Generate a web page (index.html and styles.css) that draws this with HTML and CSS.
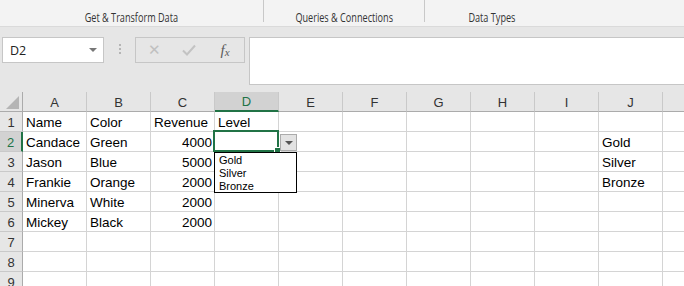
FILE: index.html
```html
<!DOCTYPE html>
<html lang="en">
    <head>
        <meta charset="utf-8">
        <title>Book1 - Excel</title>
        <link rel="stylesheet" href="styles.css">
    </head>
    <body>
        <div class="ribbon">
            <div class="group group-get"><span>Get &amp; Transform Data</span></div>
            <div class="group group-queries"><span>Queries &amp; Connections</span></div>
            <div class="group group-types"><span>Data Types</span></div>
        </div>

        <div class="formula-band">
            <div class="name-box">
                <span>D2</span>
                <span class="caret"></span>
            </div>
            <div class="grip"><i></i><i></i><i></i></div>
            <div class="fx-buttons">
                <span class="fx-btn cancel">&#x2715;</span>
                <span class="fx-btn enter">
                    <svg width="14" height="12" viewBox="0 0 14 12"><path d="M1 6.5 L5 10.5 L13 1.5" fill="none" stroke="#c3c3c3" stroke-width="2"/></svg>
                </span>
                <span class="fx-btn fx"><i>f</i><i class="x">x</i></span>
            </div>
            <div class="formula-input"></div>
        </div>

        <div class="sheet">
            <div class="grid">
                <div class="hd corner"><span class="tri"></span></div>
                <div class="hd col">A</div>
                <div class="hd col">B</div>
                <div class="hd col">C</div>
                <div class="hd col active">D</div>
                <div class="hd col">E</div>
                <div class="hd col">F</div>
                <div class="hd col">G</div>
                <div class="hd col">H</div>
                <div class="hd col">I</div>
                <div class="hd col">J</div>
                <div class="hd col"></div>

                <div class="hd row">1</div>
                <div class="c">Name</div><div class="c">Color</div><div class="c">Revenue</div><div class="c">Level</div>
                <div class="c"></div><div class="c"></div><div class="c"></div><div class="c"></div><div class="c"></div><div class="c"></div><div class="c"></div>

                <div class="hd row active">2</div>
                <div class="c">Candace</div><div class="c">Green</div><div class="c num">4000</div><div class="c"></div>
                <div class="c"></div><div class="c"></div><div class="c"></div><div class="c"></div><div class="c"></div><div class="c">Gold</div><div class="c"></div>

                <div class="hd row">3</div>
                <div class="c">Jason</div><div class="c">Blue</div><div class="c num">5000</div><div class="c"></div>
                <div class="c"></div><div class="c"></div><div class="c"></div><div class="c"></div><div class="c"></div><div class="c">Silver</div><div class="c"></div>

                <div class="hd row">4</div>
                <div class="c">Frankie</div><div class="c">Orange</div><div class="c num">2000</div><div class="c"></div>
                <div class="c"></div><div class="c"></div><div class="c"></div><div class="c"></div><div class="c"></div><div class="c">Bronze</div><div class="c"></div>

                <div class="hd row">5</div>
                <div class="c">Minerva</div><div class="c">White</div><div class="c num">2000</div><div class="c"></div>
                <div class="c"></div><div class="c"></div><div class="c"></div><div class="c"></div><div class="c"></div><div class="c"></div><div class="c"></div>

                <div class="hd row">6</div>
                <div class="c">Mickey</div><div class="c">Black</div><div class="c num">2000</div><div class="c"></div>
                <div class="c"></div><div class="c"></div><div class="c"></div><div class="c"></div><div class="c"></div><div class="c"></div><div class="c"></div>

                <div class="hd row">7</div>
                <div class="c"></div><div class="c"></div><div class="c"></div><div class="c"></div>
                <div class="c"></div><div class="c"></div><div class="c"></div><div class="c"></div><div class="c"></div><div class="c"></div><div class="c"></div>

                <div class="hd row">8</div>
                <div class="c"></div><div class="c"></div><div class="c"></div><div class="c"></div>
                <div class="c"></div><div class="c"></div><div class="c"></div><div class="c"></div><div class="c"></div><div class="c"></div><div class="c"></div>

                <div class="hd row">9</div>
                <div class="c"></div><div class="c"></div><div class="c"></div><div class="c"></div>
                <div class="c"></div><div class="c"></div><div class="c"></div><div class="c"></div><div class="c"></div><div class="c"></div><div class="c"></div>
            </div>

            <!-- active cell, in-cell dropdown and its open list -->
            <div class="selection"><span class="handle"></span></div>
            <div class="dd-button"><span class="dd-caret"></span></div>
            <ul class="dd-list">
                <li>Gold</li>
                <li>Silver</li>
                <li>Bronze</li>
            </ul>
        </div>
    </body>
</html>
```

FILE: styles.css
```css
html, body {
    margin: 0;
    padding: 0;
}

body {
    width: 684px;
    height: 286px;
    overflow: hidden;
    background-color: #E6E6E6;
    font-family: "Liberation Sans", Arial, sans-serif;
    color: #000000;
}

/* ribbon group labels */
.ribbon {
    display: flex;
    align-items: flex-start;
    height: 26px;
    background-color: #F3F3F3;
    border-bottom: 1px solid #DADADA;
}

.group {
    position: relative;
    display: flex;
    justify-content: center;
    height: 22px;
    border-right: 1px solid #C8C8C8;
    font-family: "Open Sans", sans-serif;
    font-size: 12px;
    color: #333333;
}

.group span {
    display: block;
    margin-top: 10px;
    line-height: 16px;
    white-space: nowrap;
    transform: scaleX(0.76);
}

.group-get {
    width: 263px;
}

.group-queries {
    width: 160px;
}

.group-types {
    width: 133px;
    border-right: 0;
}

/* formula bar */
.formula-band {
    display: flex;
    align-items: flex-start;
    height: 65px;
    padding-top: 10px;
    padding-left: 2px;
    box-sizing: border-box;
}

.name-box {
    display: flex;
    align-items: center;
    justify-content: space-between;
    width: 102px;
    height: 26px;
    box-sizing: border-box;
    padding: 0 6px 0 7px;
    background-color: #FFFFFF;
    border: 1px solid #C6C6C6;
    font-family: "Open Sans", sans-serif;
    font-size: 12.5px;
    color: #222222;
}

.caret {
    width: 0;
    height: 0;
    border-left: 4px solid transparent;
    border-right: 4px solid transparent;
    border-top: 4px solid #777777;
}

.grip {
    display: flex;
    flex-direction: column;
    gap: 2px;
    width: 31px;
    align-items: center;
    padding-top: 7px;
}

.grip i {
    display: block;
    width: 2px;
    height: 2px;
    background-color: #B5B5B5;
}

.fx-buttons {
    display: flex;
    align-items: center;
    width: 110px;
    height: 26px;
    box-sizing: border-box;
    padding-left: 11px;
    background-color: #E6E6E6;
    border: 1px solid #C6C6C6;
}

.fx-btn {
    display: flex;
    align-items: center;
    justify-content: center;
    height: 24px;
}

.cancel {
    width: 14px;
    font-size: 15px;
    color: #C0C0C0;
    margin-right: 21px;
}

.enter {
    width: 14px;
    margin-right: 21px;
}

.fx {
    width: 16px;
    font-family: "Liberation Serif", serif;
    font-size: 15px;
    color: #5A5A5A;
}

.fx .x {
    font-size: 11px;
    margin-top: 4px;
}

.formula-input {
    flex: 1;
    margin-left: 4px;
    height: 46px;
    background-color: #FFFFFF;
    border: 1px solid #C6C6C6;
    border-right: 0;
}

/* worksheet */
.sheet {
    position: relative;
}

.grid {
    display: grid;
    grid-template-columns: 23px repeat(11, 64px);
    grid-auto-rows: 20px;
    background-color: #FFFFFF;
}

.hd {
    display: flex;
    align-items: center;
    justify-content: center;
    box-sizing: border-box;
    background-color: #E6E6E6;
    font-size: 13px;
    color: #333333;
}

.hd.col {
    border-right: 1px solid #C9C9C9;
    border-bottom: 1px solid #ABABAB;
    padding-top: 1px;
}

.hd.row {
    border-right: 1px solid #ABABAB;
    border-bottom: 1px solid #C9C9C9;
    padding-top: 1px;
}

.hd.corner {
    position: relative;
    border-right: 1px solid #ABABAB;
    border-bottom: 1px solid #ABABAB;
}

.tri {
    position: absolute;
    right: 3px;
    bottom: 2px;
    width: 0;
    height: 0;
    border-left: 13px solid transparent;
    border-bottom: 13px solid #B5B5B5;
}

.hd.col.active {
    background-color: #D2D2D2;
    color: #217346;
    border-bottom: 2px solid #217346;
}

.hd.row.active {
    background-color: #D2D2D2;
    color: #217346;
    border-right: 2px solid #217346;
}

.c {
    box-sizing: border-box;
    border-right: 1px solid #D4D4D4;
    border-bottom: 1px solid #D4D4D4;
    padding: 2px 2px 0 3px;
    font-size: 13.5px;
    line-height: 17px;
    white-space: nowrap;
}

.c.num {
    text-align: right;
}

.selection {
    position: absolute;
    left: 213px;
    top: 38px;
    width: 66px;
    height: 22px;
    box-sizing: border-box;
    border: 2px solid #217346;
}

.handle {
    position: absolute;
    right: -4px;
    bottom: -4px;
    width: 5px;
    height: 5px;
    background-color: #217346;
    border: 1px solid #FFFFFF;
}

.dd-button {
    position: absolute;
    left: 280px;
    top: 42px;
    width: 17px;
    height: 17px;
    box-sizing: border-box;
    display: flex;
    align-items: center;
    justify-content: center;
    background-color: #E3E3E3;
    border: 1px solid #ABABAB;
}

.dd-caret {
    width: 0;
    height: 0;
    border-left: 4px solid transparent;
    border-right: 4px solid transparent;
    border-top: 4px solid #555555;
}

.dd-list {
    position: absolute;
    left: 214px;
    top: 60px;
    width: 83px;
    height: 41px;
    box-sizing: border-box;
    margin: 0;
    padding: 1px 0 0 4px;
    list-style: none;
    background-color: #FFFFFF;
    border: 1px solid #000000;
    font-size: 11px;
    line-height: 13px;
}
```
